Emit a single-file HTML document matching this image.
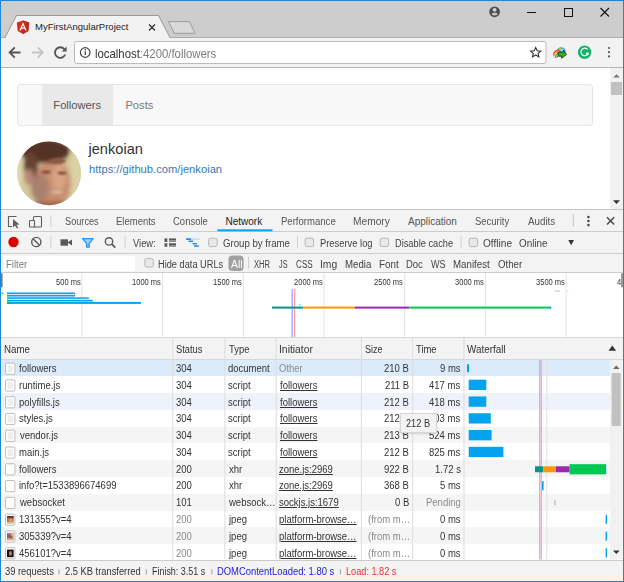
<!DOCTYPE html>
<html><head><meta charset="utf-8">
<style>
*{margin:0;padding:0;box-sizing:border-box}
html,body{width:624px;height:582px;overflow:hidden;background:#cdcdcd;font-family:"Liberation Sans",sans-serif;}
.a{position:absolute}
.t{position:absolute;white-space:nowrap;line-height:1}
#chrome{position:absolute;left:0;top:0;width:624px;height:582px}
.dt{font-size:9px;color:#333}
</style></head><body>
<div id="chrome">
<!-- title bar -->
<div class="a" style="left:0;top:0;width:624px;height:38px;background:#cdcdcd"></div>
<!-- tab -->
<svg class="a" style="left:0;top:0" width="624" height="40">
  <path d="M4.5 38.5 L16.5 15.5 L158.5 15.5 L170.5 38.5 Z" fill="#f2f2f2" stroke="#9a9a9a" stroke-width="1"/>
  <rect x="0" y="38" width="624" height="2" fill="#f2f2f2"/>
  <rect x="1" y="37.2" width="4.5" height="1" fill="#a6a6a6"/>
  <rect x="169.5" y="37.2" width="454" height="1" fill="#a6a6a6"/>
  <path d="M168.5 21.6 L189.3 21.6 L195.2 33.3 L174.4 33.3 Z" fill="#d9d9d9" stroke="#9c9c9c" stroke-width="1" stroke-linejoin="round"/><path d="M174.6 33.6 L195.2 33.6" stroke="#a8a8a8" stroke-width="1"/>
  <!-- angular icon -->
  <path d="M23 20.5 L29.2 22.6 L28.3 31 L23 34 L17.7 31 L16.8 22.6 Z" fill="#dd2a1f"/>
  <path d="M23 20.5 L29.2 22.6 L28.3 31 L23 34 Z" fill="#bf2a1e"/>
  <path d="M23 22.3 L19.4 30.5 L20.8 30.5 L21.5 28.7 L24.5 28.7 L25.2 30.5 L26.6 30.5 Z M22 27.5 L23 25 L24 27.5 Z" fill="#fff"/>
  <!-- tab close -->
  <path d="M149 24.5 L155 30.5 M155 24.5 L149 30.5" stroke="#333" stroke-width="1.3"/>
  <!-- window controls -->
  <circle cx="494.6" cy="11.8" r="5.4" fill="#4f4f4f"/>
  <circle cx="494.6" cy="9.8" r="1.9" fill="#d4d4d4"/>
  <ellipse cx="494.6" cy="14.1" rx="3" ry="1.3" fill="#c8c8c8"/>
  <rect x="527" y="12" width="9" height="1" fill="#111"/>
  <rect x="564.5" y="8.5" width="8" height="8" fill="none" stroke="#111" stroke-width="1"/>
  <path d="M600.5 8 L609 16.5 M609 8 L600.5 16.5" stroke="#111" stroke-width="1.1"/>
</svg>
<!-- tab title -->
<div class="t" style="left:35px;top:22px;font-size:9.5px;color:#222">MyFirstAngularProject</div>

<!-- toolbar -->
<div class="a" style="left:0;top:38px;width:624px;height:29px;background:#f2f2f2"></div>
<div class="a" style="left:0;top:67px;width:624px;height:1px;background:#b6b6b6"></div>
<svg class="a" style="left:0;top:38px" width="624" height="30">
  <!-- back -->
  <path d="M20.5 14.5 L9.8 14.5 M14.8 9.3 L9.6 14.5 L14.8 19.7" stroke="#555" stroke-width="1.8" fill="none"/>
  <!-- forward -->
  <path d="M32 14.5 L42.7 14.5 M37.7 9.3 L42.9 14.5 L37.7 19.7" stroke="#c4c4c4" stroke-width="1.8" fill="none"/>
  <!-- reload -->
  <path d="M64.4 11.2 A5.3 5.3 0 1 0 65.2 16.5" stroke="#555" stroke-width="1.8" fill="none"/>
  <path d="M66.6 8.6 L66.6 13.4 L61.8 13.4 Z" fill="#555"/>
  <!-- address bar -->
  <rect x="74.5" y="3.5" width="471.5" height="22" rx="2" fill="#fff" stroke="#bababa"/>
  <circle cx="85.2" cy="14.5" r="4.8" fill="none" stroke="#444" stroke-width="1.2"/>
  <rect x="84.6" y="13.2" width="1.3" height="3.8" fill="#444"/>
  <rect x="84.6" y="11" width="1.3" height="1.3" fill="#444"/>
  <!-- star -->
  <path d="M535.7 9.5 L537.2 12.8 L540.8 13.1 L538.1 15.4 L538.9 18.9 L535.7 17 L532.5 18.9 L533.3 15.4 L530.6 13.1 L534.2 12.8 Z" fill="none" stroke="#333" stroke-width="1.1"/>
  <!-- idm -->
  <circle cx="561.2" cy="13.8" r="4.6" fill="#4a90d8"/>
  <path d="M557 12 Q559 9 562 9.5 L561 13 Z" fill="#8fc85a"/>
  <circle cx="562.5" cy="12.3" r="1.6" fill="#a8d8f8"/>
  <path d="M553.8 17.5 Q553.5 12.5 559 12.2" stroke="#e83a2a" stroke-width="1.4" fill="none"/>
  <path d="M554.2 18.8 Q554.5 14 559 13.6" stroke="#f0c020" stroke-width="1.2" fill="none"/>
  <path d="M555.3 19.6 Q556 15.6 559.5 15" stroke="#3aa83a" stroke-width="1.2" fill="none"/>
  <path d="M556.4 20 Q558 17 560 16.5" stroke="#3a78d8" stroke-width="1" fill="none"/>
  <path d="M558.2 14.2 L563.2 14.2 L563.2 12.2 L566.6 16.6 L561.6 20.3 L561.6 18.2 L558.2 18.2 Z" fill="#22b822" stroke="#111" stroke-width="0.7"/>
  <!-- grammarly -->
  <circle cx="584.6" cy="14.3" r="6.7" fill="#15b36a"/>
  <path d="M587.6 11.4 A3.8 3.8 0 1 0 588.3 15.4 L586 15.4" stroke="#fff" stroke-width="1.15" fill="none"/>
  <path d="M586.8 14 L588.8 16.8 L586 17.5 Z" fill="#fff"/>
  <!-- menu -->
  <circle cx="609" cy="10" r="1.1" fill="#555"/>
  <circle cx="609" cy="14.2" r="1.1" fill="#555"/>
  <circle cx="609" cy="18.4" r="1.1" fill="#555"/>
</svg>
<div class="t" style="left:95.2px;top:47.3px;font-size:13px;color:#333;transform:scaleX(0.874);transform-origin:0 0">localhost<span style="color:#7a7a7a">:4200/followers</span></div>

<!-- page content -->
<div class="a" style="left:1px;top:68px;width:622px;height:141.5px;background:#fff"></div>
<!-- page scrollbar -->
<div class="a" style="left:610px;top:68px;width:13px;height:142px;background:#f1f1f1"></div>
<div class="a" style="left:611px;top:82px;width:10.5px;height:13px;background:#c1c1c1"></div>
<svg class="a" style="left:610px;top:68px" width="13" height="142">
  <path d="M3.2 9.6 L6.5 6.3 L9.8 9.6 Z" fill="#777"/>
  <path d="M3 132.3 L6.5 136 L10 132.3 Z" fill="#333"/>
</svg>
<!-- navbar -->
<div class="a" style="left:16.8px;top:84px;width:576.7px;height:41.5px;background:#f8f8f8;border:1px solid #e5e5e5;border-radius:3px"></div>
<div class="a" style="left:41.7px;top:85px;width:71px;height:39.5px;background:#e9e9e9"></div>
<div class="t" style="left:53.3px;top:99.5px;font-size:11.2px;color:#555">Followers</div>
<div class="t" style="left:125.4px;top:99.5px;font-size:11.2px;color:#777">Posts</div>
<!-- avatar -->
<svg class="a" style="left:0;top:130px" width="90" height="85">
<defs><clipPath id="av"><circle cx="49" cy="43.3" r="31.9"/></clipPath>
<filter id="bl" x="-20%" y="-20%" width="140%" height="140%"><feGaussianBlur stdDeviation="2.2"/></filter>
<filter id="bl2"><feGaussianBlur stdDeviation="1"/></filter></defs>
<g clip-path="url(#av)">
<rect x="10" y="5" width="80" height="80" fill="#d2c799"/>
<g filter="url(#bl)">
<rect x="12" y="20" width="9" height="60" fill="#e0dab4"/>
<rect x="71" y="20" width="14" height="60" fill="#dad2a4"/>
<ellipse cx="53" cy="53" rx="18" ry="24" fill="#c89070"/>
<ellipse cx="59" cy="47" rx="7" ry="13" fill="#d8a483"/>
<ellipse cx="45" cy="21" rx="25" ry="12" fill="#553226"/>
<ellipse cx="31" cy="36" rx="7" ry="14" fill="#654232"/>
<ellipse cx="40" cy="58" rx="9" ry="14" fill="#a98070"/>
<ellipse cx="29" cy="47" rx="4.5" ry="8" fill="#b98575"/>
<ellipse cx="52" cy="79" rx="24" ry="8" fill="#a0644a"/>
</g>
<g filter="url(#bl2)">
<ellipse cx="46" cy="42" rx="5" ry="1.6" fill="#7a4c3a"/>
<ellipse cx="62" cy="43" rx="4.5" ry="1.6" fill="#7a4c3a"/>
<ellipse cx="57" cy="62" rx="6" ry="1.8" fill="#d9b39c"/>
<ellipse cx="57" cy="31" rx="9" ry="3" fill="#8a5a44"/>
</g>
</g>
</svg>
<div class="t" style="left:88.5px;top:141.8px;font-size:14.6px;color:#333">jenkoian</div>
<div class="t" style="left:89px;top:163.5px;font-size:11.2px;color:#337ab7">https://github.com/jenkoian</div>

<!-- DEVTOOLS -->
<div class="a" style="left:1px;top:210px;width:622px;height:371px;background:#fff;"></div>
<div class="a" style="left:1px;top:209.2px;width:622px;height:1px;background:#c4c4c4;"></div>
<div class="a" style="left:1px;top:210.2px;width:622px;height:21px;background:#f3f3f3;"></div>
<div class="a" style="left:1px;top:231px;width:622px;height:1px;background:#cccccc;"></div>
<div class="a" style="left:1px;top:232px;width:622px;height:21px;background:#f3f3f3;"></div>
<div class="a" style="left:1px;top:252.6px;width:622px;height:1px;background:#cccccc;"></div>
<div class="a" style="left:1px;top:253.5px;width:622px;height:19px;background:#f3f3f3;"></div>
<div class="a" style="left:4px;top:255.5px;width:130.5px;height:15px;background:#fff;"></div>
<div class="a" style="left:1px;top:272.3px;width:622px;height:1px;background:#cccccc;"></div>
<div class="a" style="left:1px;top:337px;width:622px;height:1px;background:#d6d6d6;"></div>
<div class="a" style="left:1px;top:338px;width:622px;height:21.3px;background:#f3f3f3;"></div>
<div class="a" style="left:1px;top:359.2px;width:622px;height:1px;background:#d6d6d6;"></div>
<div class="a" style="left:1px;top:559.5px;width:622px;height:1px;background:#cccccc;"></div>
<div class="a" style="left:1px;top:560.5px;width:622px;height:20.5px;background:#f3f3f3;"></div>
<svg class="a" style="left:0;top:0" width="624" height="582">
<path d="M16.5 216.5 H8.5 V226.5 H12" fill="none" stroke="#5f5f5f" stroke-width="1.1"/>
<path d="M13 219 L13 227.5 L15 225.5 L17 228.5 L18.3 227.7 L16.5 224.8 L19.5 224.5 Z" fill="#5f5f5f"/>
<rect x="33.5" y="216.5" width="8" height="10.5" rx="1" fill="none" stroke="#5f5f5f" stroke-width="1.1"/>
<rect x="29.5" y="220.5" width="5" height="6.5" rx="0.8" fill="#f3f3f3" stroke="#5f5f5f" stroke-width="1.1"/>
<rect x="50.3" y="215.5" width="1" height="11.5" fill="#cfcfcf"/>
<rect x="572.8" y="214" width="1" height="12.4" fill="#c0c0c0"/>
<circle cx="588.4" cy="217.0" r="1.3" fill="#4a4a4a"/>
<circle cx="588.4" cy="221.0" r="1.3" fill="#4a4a4a"/>
<circle cx="588.4" cy="225.1" r="1.3" fill="#4a4a4a"/>
<path d="M607 217.3 L614.2 224.5 M614.2 217.3 L607 224.5" stroke="#4a4a4a" stroke-width="1.5"/>
<rect x="217.3" y="229.3" width="55.2" height="2" fill="#03a9f4"/>
<circle cx="13.5" cy="242" r="5.2" fill="#dd0000"/>
<circle cx="36.3" cy="242" r="4.6" fill="none" stroke="#5a5a5a" stroke-width="1.4"/>
<path d="M33.1 238.8 L39.5 245.2" stroke="#5a5a5a" stroke-width="1.4"/>
<rect x="50.3" y="236.2" width="1" height="12" fill="#cfcfcf"/>
<rect x="60.5" y="239.3" width="7.5" height="6.4" fill="#5a5a5a"/>
<path d="M67.5 242.5 L72 239.5 L72 245.5 Z" fill="#5a5a5a"/>
<path d="M82.6 238.6 H93.2 L89.2 243.4 V247 H86.6 V243.4 Z" fill="#9fd0f7" stroke="#2196f3" stroke-width="1.3" stroke-linejoin="round"/>
<circle cx="109" cy="241.4" r="3.7" fill="none" stroke="#5a5a5a" stroke-width="1.4"/>
<path d="M111.8 244.2 L115.3 247.7" stroke="#5a5a5a" stroke-width="1.8"/>
<rect x="124.6" y="236.2" width="1" height="12" fill="#cfcfcf"/>
<rect x="164.5" y="238.4" width="2.8" height="3.6" fill="#5a5a5a"/>
<rect x="169" y="238.4" width="7" height="1.8" fill="#5a5a5a"/>
<rect x="169" y="240.20000000000002" width="7" height="1.8" fill="#8a8a8a"/>
<rect x="164.5" y="243.2" width="2.8" height="3.6" fill="#5a5a5a"/>
<rect x="169" y="243.2" width="7" height="1.8" fill="#5a5a5a"/>
<rect x="169" y="245.0" width="7" height="1.8" fill="#8a8a8a"/>
<rect x="186" y="238.3" width="13.7" height="1.6" rx="0.6" fill="#c6def5"/>
<rect x="186" y="238.3" width="5" height="1.6" rx="0.6" fill="#2a8be6"/>
<rect x="188.5" y="240.6" width="4.7" height="1.5" rx="0.6" fill="#2a8be6"/>
<rect x="192.4" y="242.9" width="4.7" height="1.5" rx="0.6" fill="#2a8be6"/>
<rect x="193.9" y="245.3" width="5" height="1.5" rx="0.6" fill="#2a8be6"/>
<rect x="208.70000000000002" y="238.2" width="8.4" height="8.4" rx="1.8" fill="#e9e9e9" stroke="#b5b5b5" stroke-width="1"/>
<rect x="305.2" y="238.2" width="8.4" height="8.4" rx="1.8" fill="#e9e9e9" stroke="#b5b5b5" stroke-width="1"/>
<rect x="380.2" y="238.2" width="8.4" height="8.4" rx="1.8" fill="#e9e9e9" stroke="#b5b5b5" stroke-width="1"/>
<rect x="469.2" y="238.2" width="8.4" height="8.4" rx="1.8" fill="#e9e9e9" stroke="#b5b5b5" stroke-width="1"/>
<rect x="297" y="236.2" width="1" height="12" fill="#cfcfcf"/>
<rect x="460.6" y="236.2" width="1" height="12" fill="#cfcfcf"/>
<path d="M568.3 240 L574 240 L571.15 245.3 Z" fill="#333"/>
<rect x="144.9" y="258.6" width="8.4" height="8.4" rx="1.8" fill="#e9e9e9" stroke="#b5b5b5" stroke-width="1"/>
<rect x="228.5" y="255.5" width="15.1" height="15.5" rx="4" fill="#a0a0a0"/>
<rect x="248" y="256.5" width="1" height="12" fill="#cfcfcf"/>
<rect x="1" y="273.3" width="1.6" height="14" fill="#7a7a7a"/>
<rect x="621.3" y="273.3" width="1.5" height="14" fill="#7a7a7a"/>
</svg>
<div class="t" style="left:64.64px;top:216.44px;font-size:10px;line-height:12.0px;color:#555;transform:scaleX(0.9190);transform-origin:0 0;">Sources</div>
<div class="t" style="left:116.24px;top:216.44px;font-size:10px;line-height:12.0px;color:#555;transform:scaleX(0.9506);transform-origin:0 0;">Elements</div>
<div class="t" style="left:173.33px;top:216.44px;font-size:10px;line-height:12.0px;color:#555;transform:scaleX(0.9496);transform-origin:0 0;">Console</div>
<div class="t" style="left:225.49px;top:216.44px;font-size:10px;line-height:12.0px;color:#222;">Network</div>
<div class="t" style="left:280.74px;top:216.44px;font-size:10px;line-height:12.0px;color:#555;transform:scaleX(0.9554);transform-origin:0 0;">Performance</div>
<div class="t" style="left:352.68px;top:216.44px;font-size:10px;line-height:12.0px;color:#555;transform:scaleX(1.0198);transform-origin:0 0;">Memory</div>
<div class="t" style="left:408.00px;top:216.44px;font-size:10px;line-height:12.0px;color:#555;">Application</div>
<div class="t" style="left:474.53px;top:216.44px;font-size:10px;line-height:12.0px;color:#555;transform:scaleX(0.9466);transform-origin:0 0;">Security</div>
<div class="t" style="left:527.90px;top:216.44px;font-size:10px;line-height:12.0px;color:#555;transform:scaleX(0.9781);transform-origin:0 0;">Audits</div>
<div class="t" style="left:132.71px;top:237.53px;font-size:10px;line-height:12.0px;color:#444;transform:scaleX(0.9356);transform-origin:0 0;">View:</div>
<div class="t" style="left:222.72px;top:237.53px;font-size:10px;line-height:12.0px;color:#444;transform:scaleX(0.9635);transform-origin:0 0;">Group by frame</div>
<div class="t" style="left:319.55px;top:237.53px;font-size:10px;line-height:12.0px;color:#444;transform:scaleX(0.9360);transform-origin:0 0;">Preserve log</div>
<div class="t" style="left:394.66px;top:237.53px;font-size:10px;line-height:12.0px;color:#444;transform:scaleX(0.9252);transform-origin:0 0;">Disable cache</div>
<div class="t" style="left:482.69px;top:237.53px;font-size:10px;line-height:12.0px;color:#444;transform:scaleX(1.0108);transform-origin:0 0;">Offline</div>
<div class="t" style="left:518.71px;top:237.53px;font-size:10px;line-height:12.0px;color:#444;transform:scaleX(0.9892);transform-origin:0 0;">Online</div>
<div class="t" style="left:5.94px;top:258.64px;font-size:10px;line-height:12.0px;color:#7b7b7b;transform:scaleX(0.9484);transform-origin:0 0;">Filter</div>
<div class="t" style="left:158.36px;top:258.64px;font-size:10px;line-height:12.0px;color:#444;transform:scaleX(0.9236);transform-origin:0 0;">Hide data URLs</div>
<div class="t" style="left:230.50px;top:258.64px;font-size:10px;line-height:12.0px;color:#fff;transform:scaleX(1.0476);transform-origin:0 0;">All</div>
<div class="t" style="left:253.77px;top:258.64px;font-size:10px;line-height:12.0px;color:#444;transform:scaleX(0.7586);transform-origin:0 0;">XHR</div>
<div class="t" style="left:279.45px;top:258.64px;font-size:10px;line-height:12.0px;color:#444;transform:scaleX(0.7273);transform-origin:0 0;">JS</div>
<div class="t" style="left:295.89px;top:258.64px;font-size:10px;line-height:12.0px;color:#444;transform:scaleX(0.8163);transform-origin:0 0;">CSS</div>
<div class="t" style="left:319.87px;top:258.64px;font-size:10px;line-height:12.0px;color:#444;transform:scaleX(1.0331);transform-origin:0 0;">Img</div>
<div class="t" style="left:344.63px;top:258.64px;font-size:10px;line-height:12.0px;color:#444;transform:scaleX(0.9660);transform-origin:0 0;">Media</div>
<div class="t" style="left:378.91px;top:258.64px;font-size:10px;line-height:12.0px;color:#444;transform:scaleX(0.9843);transform-origin:0 0;">Font</div>
<div class="t" style="left:406.24px;top:258.64px;font-size:10px;line-height:12.0px;color:#444;transform:scaleX(0.9461);transform-origin:0 0;">Doc</div>
<div class="t" style="left:431.00px;top:258.64px;font-size:10px;line-height:12.0px;color:#444;transform:scaleX(0.9038);transform-origin:0 0;">WS</div>
<div class="t" style="left:452.82px;top:258.64px;font-size:10px;line-height:12.0px;color:#444;transform:scaleX(0.9729);transform-origin:0 0;">Manifest</div>
<div class="t" style="left:497.72px;top:258.64px;font-size:10px;line-height:12.0px;color:#444;transform:scaleX(0.9672);transform-origin:0 0;">Other</div>
<svg class="a" style="left:0;top:0" width="624" height="582">
<rect x="81.40" y="273" width="1" height="64" fill="#e4e4e4"/>
<rect x="162.10" y="273" width="1" height="64" fill="#e4e4e4"/>
<rect x="242.80" y="273" width="1" height="64" fill="#e4e4e4"/>
<rect x="323.50" y="273" width="1" height="64" fill="#e4e4e4"/>
<rect x="404.20" y="273" width="1" height="64" fill="#e4e4e4"/>
<rect x="484.90" y="273" width="1" height="64" fill="#e4e4e4"/>
<rect x="565.60" y="273" width="1" height="64" fill="#e4e4e4"/>
<rect x="7" y="296" width="68" height="1.4" fill="#9ad8f8"/>
<rect x="7" y="300.9" width="86" height="1.2" fill="#9ad8f8"/>
<rect x="7" y="292.5" width="68" height="1.6" fill="#03a3ef"/>
<rect x="7" y="294.9" width="68" height="1.3" fill="#03a3ef"/>
<rect x="7" y="297.3" width="81.8" height="1.5" fill="#03a3ef"/>
<rect x="7" y="299.8" width="85.7" height="1.3" fill="#03a3ef"/>
<rect x="7" y="301.9" width="134" height="2.0" fill="#03a3ef"/>
<rect x="7" y="299.8" width="3" height="1.3" fill="#1cb36a"/>
<rect x="7" y="301.9" width="3.5" height="2" fill="#1cb36a"/>
<circle cx="2.5" cy="293.3" r="0.9" fill="#03a3ef"/>
<rect x="291.5" y="289" width="1.4" height="48" fill="#a8a8ff"/>
<rect x="294" y="289" width="1.2" height="48" fill="#ff9f9f"/>
<rect x="272" y="306.6" width="31.3" height="2" fill="#009688"/>
<rect x="303.3" y="306.6" width="51.5" height="2" fill="#ff9800"/>
<rect x="354.8" y="306.6" width="54.5" height="2" fill="#9c27b0"/>
<rect x="409.3" y="306.6" width="141.5" height="2" fill="#00c853"/>
<rect x="550" y="306.6" width="1.2" height="2" fill="#03a3ef"/>
<rect x="299.3" y="304.4" width="1.2" height="1.2" fill="#03a3ef"/>
<rect x="555" y="290.5" width="5" height="1" fill="#bdbdbd"/>
<rect x="567.3" y="290.5" width="1" height="1" fill="#bdbdbd"/>
</svg>
<div class="a" style="left:0;top:273px;width:621.3px;height:64px;overflow:hidden">
<div class="t" style="left:55.86px;top:4.54px;font-size:8.2px;line-height:9.84px;color:#333;transform:scaleX(0.9200);transform-origin:0 0;">500 ms</div>
<div class="t" style="left:132.33px;top:4.54px;font-size:8.2px;line-height:9.84px;color:#333;transform:scaleX(0.9200);transform-origin:0 0;">1000 ms</div>
<div class="t" style="left:213.03px;top:4.54px;font-size:8.2px;line-height:9.84px;color:#333;transform:scaleX(0.9200);transform-origin:0 0;">1500 ms</div>
<div class="t" style="left:293.73px;top:4.54px;font-size:8.2px;line-height:9.84px;color:#333;transform:scaleX(0.9200);transform-origin:0 0;">2000 ms</div>
<div class="t" style="left:374.43px;top:4.54px;font-size:8.2px;line-height:9.84px;color:#333;transform:scaleX(0.9200);transform-origin:0 0;">2500 ms</div>
<div class="t" style="left:455.13px;top:4.54px;font-size:8.2px;line-height:9.84px;color:#333;transform:scaleX(0.9200);transform-origin:0 0;">3000 ms</div>
<div class="t" style="left:535.83px;top:4.54px;font-size:8.2px;line-height:9.84px;color:#333;transform:scaleX(0.9200);transform-origin:0 0;">3500 ms</div>
<div class="t" style="left:616.53px;top:4.54px;font-size:8.2px;line-height:9.84px;color:#333;transform:scaleX(0.9200);transform-origin:0 0;">4000 ms</div>
</div>
<div class="t" style="left:3.72px;top:343.54px;font-size:10px;line-height:12.0px;color:#333;transform:scaleX(0.9724);transform-origin:0 0;">Name</div>
<div class="t" style="left:176.23px;top:343.54px;font-size:10px;line-height:12.0px;color:#333;transform:scaleX(0.9343);transform-origin:0 0;">Status</div>
<div class="t" style="left:228.51px;top:343.54px;font-size:10px;line-height:12.0px;color:#333;transform:scaleX(0.9429);transform-origin:0 0;">Type</div>
<div class="t" style="left:278.77px;top:343.54px;font-size:10px;line-height:12.0px;color:#333;transform:scaleX(1.0346);transform-origin:0 0;">Initiator</div>
<div class="t" style="left:364.85px;top:343.54px;font-size:10px;line-height:12.0px;color:#333;transform:scaleX(0.9027);transform-origin:0 0;">Size</div>
<div class="t" style="left:416.31px;top:343.54px;font-size:10px;line-height:12.0px;color:#333;transform:scaleX(0.9434);transform-origin:0 0;">Time</div>
<div class="t" style="left:467.00px;top:343.54px;font-size:10px;line-height:12.0px;color:#333;transform:scaleX(0.9870);transform-origin:0 0;">Waterfall</div>
<div class="a" style="left:1px;top:359.6px;width:609px;height:16.78px;background:#dcebfc;"></div>
<div class="a" style="left:1px;top:393.16px;width:609px;height:16.78px;background:#eef3fb;"></div>
<div class="a" style="left:1px;top:426.72px;width:609px;height:16.78px;background:#f5f5f5;"></div>
<div class="a" style="left:1px;top:460.28px;width:609px;height:16.78px;background:#f5f5f5;"></div>
<div class="a" style="left:1px;top:493.84px;width:609px;height:16.78px;background:#f5f5f5;"></div>
<div class="a" style="left:1px;top:527.4px;width:609px;height:16.78px;background:#f5f5f5;"></div>
<svg class="a" style="left:0;top:0" width="624" height="582">
<rect x="172.3" y="338" width="1" height="221.5" fill="#dcdcdc"/>
<rect x="224.4" y="338" width="1" height="221.5" fill="#dcdcdc"/>
<rect x="275.7" y="338" width="1" height="221.5" fill="#dcdcdc"/>
<rect x="360.9" y="338" width="1" height="221.5" fill="#dcdcdc"/>
<rect x="412.2" y="338" width="1" height="221.5" fill="#dcdcdc"/>
<rect x="463.5" y="338" width="1" height="221.5" fill="#dcdcdc"/>
<rect x="546.3" y="360" width="1" height="199.5" fill="#e3e3e3"/>
<rect x="539.2" y="360" width="1.1" height="199.5" fill="#a8a8ff"/>
<rect x="540.6" y="360" width="1.3" height="199.5" fill="#ff9fb4"/>
<rect x="5.5" y="363.10" width="9.4" height="11.2" rx="0.8" fill="#fff" stroke="#bdbdbd" stroke-width="1"/>
<rect x="7.6" y="365.20" width="5.4" height="7" fill="#eeeeee"/>
<rect x="5.5" y="379.88" width="9.4" height="11.2" rx="0.8" fill="#fff" stroke="#bdbdbd" stroke-width="1"/>
<rect x="7.6" y="381.98" width="5.4" height="7" fill="#eeeeee"/>
<rect x="5.5" y="396.66" width="9.4" height="11.2" rx="0.8" fill="#fff" stroke="#bdbdbd" stroke-width="1"/>
<rect x="7.6" y="398.76" width="5.4" height="7" fill="#eeeeee"/>
<rect x="5.5" y="413.44" width="9.4" height="11.2" rx="0.8" fill="#fff" stroke="#bdbdbd" stroke-width="1"/>
<rect x="7.6" y="415.54" width="5.4" height="7" fill="#eeeeee"/>
<rect x="5.5" y="430.22" width="9.4" height="11.2" rx="0.8" fill="#fff" stroke="#bdbdbd" stroke-width="1"/>
<rect x="7.6" y="432.32" width="5.4" height="7" fill="#eeeeee"/>
<rect x="5.5" y="447.00" width="9.4" height="11.2" rx="0.8" fill="#fff" stroke="#bdbdbd" stroke-width="1"/>
<rect x="7.6" y="449.10" width="5.4" height="7" fill="#eeeeee"/>
<rect x="5.5" y="463.78" width="9.4" height="11.2" rx="0.8" fill="#fff" stroke="#bdbdbd" stroke-width="1"/>
<rect x="5.5" y="480.56" width="9.4" height="11.2" rx="0.8" fill="#fff" stroke="#bdbdbd" stroke-width="1"/>
<rect x="5.5" y="497.34" width="9.4" height="11.2" rx="0.8" fill="#fff" stroke="#bdbdbd" stroke-width="1"/>
<rect x="5.5" y="514.12" width="9.4" height="11.2" rx="0.8" fill="#fff" stroke="#bdbdbd" stroke-width="1"/>
<rect x="7.0" y="516.02" width="6.6" height="7.4" fill="#b07048"/>
<rect x="7.0" y="516.02" width="6.6" height="2.2" fill="#6a3a28"/>
<rect x="8.8" y="518.62" width="3.4" height="3.6" fill="#d89a6a"/>
<rect x="7.0" y="522.02" width="6.6" height="1.4" fill="#d8c890"/>
<rect x="5.5" y="530.90" width="9.4" height="11.2" rx="0.8" fill="#fff" stroke="#bdbdbd" stroke-width="1"/>
<rect x="7.0" y="532.80" width="6.6" height="7.4" fill="#b09080"/>
<rect x="7.0" y="533.80" width="2.5" height="4" fill="#5a6aa8"/>
<rect x="9.2" y="534.80" width="3" height="4" fill="#b84a30"/>
<rect x="11.5" y="533.30" width="2" height="3" fill="#e0c880"/>
<rect x="8.0" y="538.30" width="5" height="1.9" fill="#d8b070"/>
<rect x="5.5" y="547.68" width="9.4" height="11.2" rx="0.8" fill="#fff" stroke="#bdbdbd" stroke-width="1"/>
<rect x="7.0" y="549.58" width="6.6" height="7.6" fill="#151515"/>
<rect x="9.0" y="551.38" width="2.8" height="4" fill="#c88050"/>
<rect x="467" y="364.20" width="2.00" height="8" fill="#03a3ef"/>
<rect x="468.7" y="379.68" width="17.60" height="10.3" fill="#03a3ef"/>
<rect x="468.7" y="396.46" width="17.60" height="10.3" fill="#03a3ef"/>
<rect x="468.7" y="413.24" width="22.10" height="10.3" fill="#03a3ef"/>
<rect x="468.7" y="430.02" width="22.90" height="10.3" fill="#03a3ef"/>
<rect x="468.7" y="446.80" width="34.70" height="10.3" fill="#03a3ef"/>
<rect x="535" y="466.28" width="8.30" height="6" fill="#009688"/>
<rect x="543.3" y="466.28" width="12.70" height="6" fill="#ff9800"/>
<rect x="556" y="466.28" width="13.60" height="6" fill="#9c27b0"/>
<rect x="569.6" y="464.18" width="35.40" height="10.2" fill="#00c853"/>
<rect x="605" y="464.18" width="1.20" height="10.2" fill="#03a3ef"/>
<rect x="542" y="481.26" width="1.60" height="9" fill="#03a3ef"/>
<rect x="554.4" y="500.24" width="1.00" height="5.2" fill="#aaaaaa"/>
<rect x="605.6" y="514.82" width="1.40" height="9" fill="#03a3ef"/>
<rect x="605.6" y="531.60" width="1.40" height="9" fill="#03a3ef"/>
<rect x="605.6" y="548.38" width="1.40" height="9" fill="#03a3ef"/>
<rect x="610" y="360" width="12.6" height="199.5" fill="#f1f1f1"/>
<rect x="611.7" y="373" width="9" height="53" fill="#c1c1c1"/>
<path d="M613 369 L616.3 365.5 L619.6 369 Z" fill="#6a6a6a"/>
<path d="M613 550.5 L616.3 554 L619.6 550.5 Z" fill="#333"/>
<path d="M608.5 350.8 L612.3 345.5 L616.1 350.8 Z" fill="#333"/>
<rect x="58.5" y="569.3" width="1" height="5" fill="#a0a0a0"/>
<rect x="145.8" y="569.3" width="1" height="5" fill="#a0a0a0"/>
<rect x="211.4" y="569.3" width="1" height="5" fill="#a0a0a0"/>
<rect x="339.9" y="569.3" width="1" height="5" fill="#a0a0a0"/>
</svg>
<div class="t" style="left:19.41px;top:362.94px;font-size:10px;line-height:12.0px;color:#333;transform:scaleX(0.9500);transform-origin:0 0;">followers</div>
<div class="t" style="left:176.32px;top:362.94px;font-size:10px;line-height:12.0px;color:#333;transform:scaleX(0.9500);transform-origin:0 0;">304</div>
<div class="t" style="left:228.32px;top:362.94px;font-size:10px;line-height:12.0px;color:#333;transform:scaleX(0.9500);transform-origin:0 0;">document</div>
<div class="t" style="left:279.22px;top:362.94px;font-size:10px;line-height:12.0px;color:#8a8a8a;transform:scaleX(0.9500);transform-origin:0 0;">Other</div>
<div class="t" style="left:384.38px;top:362.94px;font-size:10px;line-height:12.0px;color:#333;transform:scaleX(0.9500);transform-origin:0 0;">210 B</div>
<div class="t" style="left:439.87px;top:362.94px;font-size:10px;line-height:12.0px;color:#333;transform:scaleX(0.9500);transform-origin:0 0;">9 ms</div>
<div class="t" style="left:18.84px;top:379.72px;font-size:10px;line-height:12.0px;color:#333;transform:scaleX(0.9500);transform-origin:0 0;">runtime.js</div>
<div class="t" style="left:176.32px;top:379.72px;font-size:10px;line-height:12.0px;color:#333;transform:scaleX(0.9500);transform-origin:0 0;">304</div>
<div class="t" style="left:228.41px;top:379.72px;font-size:10px;line-height:12.0px;color:#333;transform:scaleX(0.9500);transform-origin:0 0;">script</div>
<div class="t" style="left:279.60px;top:379.72px;font-size:10px;line-height:12.0px;color:#333;transform:scaleX(0.9500);transform-origin:0 0;text-decoration:underline;">followers</div>
<div class="t" style="left:385.14px;top:379.72px;font-size:10px;line-height:12.0px;color:#333;transform:scaleX(0.9500);transform-origin:0 0;">211 B</div>
<div class="t" style="left:429.32px;top:379.72px;font-size:10px;line-height:12.0px;color:#333;transform:scaleX(0.9500);transform-origin:0 0;">417 ms</div>
<div class="t" style="left:18.93px;top:396.50px;font-size:10px;line-height:12.0px;color:#333;transform:scaleX(0.9500);transform-origin:0 0;">polyfills.js</div>
<div class="t" style="left:176.32px;top:396.50px;font-size:10px;line-height:12.0px;color:#333;transform:scaleX(0.9500);transform-origin:0 0;">304</div>
<div class="t" style="left:228.41px;top:396.50px;font-size:10px;line-height:12.0px;color:#333;transform:scaleX(0.9500);transform-origin:0 0;">script</div>
<div class="t" style="left:279.60px;top:396.50px;font-size:10px;line-height:12.0px;color:#333;transform:scaleX(0.9500);transform-origin:0 0;text-decoration:underline;">followers</div>
<div class="t" style="left:384.38px;top:396.50px;font-size:10px;line-height:12.0px;color:#333;transform:scaleX(0.9500);transform-origin:0 0;">212 B</div>
<div class="t" style="left:429.32px;top:396.50px;font-size:10px;line-height:12.0px;color:#333;transform:scaleX(0.9500);transform-origin:0 0;">418 ms</div>
<div class="t" style="left:19.21px;top:413.28px;font-size:10px;line-height:12.0px;color:#333;transform:scaleX(0.9500);transform-origin:0 0;">styles.js</div>
<div class="t" style="left:176.32px;top:413.28px;font-size:10px;line-height:12.0px;color:#333;transform:scaleX(0.9500);transform-origin:0 0;">304</div>
<div class="t" style="left:228.41px;top:413.28px;font-size:10px;line-height:12.0px;color:#333;transform:scaleX(0.9500);transform-origin:0 0;">script</div>
<div class="t" style="left:279.60px;top:413.28px;font-size:10px;line-height:12.0px;color:#333;transform:scaleX(0.9500);transform-origin:0 0;text-decoration:underline;">followers</div>
<div class="t" style="left:384.38px;top:413.28px;font-size:10px;line-height:12.0px;color:#333;transform:scaleX(0.9500);transform-origin:0 0;">212 B</div>
<div class="t" style="left:429.32px;top:413.28px;font-size:10px;line-height:12.0px;color:#333;transform:scaleX(0.9500);transform-origin:0 0;">503 ms</div>
<div class="t" style="left:19.50px;top:430.06px;font-size:10px;line-height:12.0px;color:#333;transform:scaleX(0.9500);transform-origin:0 0;">vendor.js</div>
<div class="t" style="left:176.32px;top:430.06px;font-size:10px;line-height:12.0px;color:#333;transform:scaleX(0.9500);transform-origin:0 0;">304</div>
<div class="t" style="left:228.41px;top:430.06px;font-size:10px;line-height:12.0px;color:#333;transform:scaleX(0.9500);transform-origin:0 0;">script</div>
<div class="t" style="left:279.60px;top:430.06px;font-size:10px;line-height:12.0px;color:#333;transform:scaleX(0.9500);transform-origin:0 0;text-decoration:underline;">followers</div>
<div class="t" style="left:384.38px;top:430.06px;font-size:10px;line-height:12.0px;color:#333;transform:scaleX(0.9500);transform-origin:0 0;">213 B</div>
<div class="t" style="left:429.32px;top:430.06px;font-size:10px;line-height:12.0px;color:#333;transform:scaleX(0.9500);transform-origin:0 0;">524 ms</div>
<div class="t" style="left:18.84px;top:446.84px;font-size:10px;line-height:12.0px;color:#333;transform:scaleX(0.9500);transform-origin:0 0;">main.js</div>
<div class="t" style="left:176.32px;top:446.84px;font-size:10px;line-height:12.0px;color:#333;transform:scaleX(0.9500);transform-origin:0 0;">304</div>
<div class="t" style="left:228.41px;top:446.84px;font-size:10px;line-height:12.0px;color:#333;transform:scaleX(0.9500);transform-origin:0 0;">script</div>
<div class="t" style="left:279.60px;top:446.84px;font-size:10px;line-height:12.0px;color:#333;transform:scaleX(0.9500);transform-origin:0 0;text-decoration:underline;">followers</div>
<div class="t" style="left:384.38px;top:446.84px;font-size:10px;line-height:12.0px;color:#333;transform:scaleX(0.9500);transform-origin:0 0;">212 B</div>
<div class="t" style="left:429.32px;top:446.84px;font-size:10px;line-height:12.0px;color:#333;transform:scaleX(0.9500);transform-origin:0 0;">825 ms</div>
<div class="t" style="left:19.41px;top:463.62px;font-size:10px;line-height:12.0px;color:#333;transform:scaleX(0.9500);transform-origin:0 0;">followers</div>
<div class="t" style="left:176.22px;top:463.62px;font-size:10px;line-height:12.0px;color:#333;transform:scaleX(0.9500);transform-origin:0 0;">200</div>
<div class="t" style="left:228.60px;top:463.62px;font-size:10px;line-height:12.0px;color:#333;transform:scaleX(0.9500);transform-origin:0 0;">xhr</div>
<div class="t" style="left:279.32px;top:463.62px;font-size:10px;line-height:12.0px;color:#333;transform:scaleX(0.9500);transform-origin:0 0;text-decoration:underline;">zone.js:2969</div>
<div class="t" style="left:384.38px;top:463.62px;font-size:10px;line-height:12.0px;color:#333;transform:scaleX(0.9500);transform-origin:0 0;">922 B</div>
<div class="t" style="left:434.64px;top:463.62px;font-size:10px;line-height:12.0px;color:#333;transform:scaleX(0.9500);transform-origin:0 0;">1.72 s</div>
<div class="t" style="left:18.84px;top:480.40px;font-size:10px;line-height:12.0px;color:#333;transform:scaleX(0.9500);transform-origin:0 0;">info?t=1533896674699</div>
<div class="t" style="left:176.22px;top:480.40px;font-size:10px;line-height:12.0px;color:#333;transform:scaleX(0.9500);transform-origin:0 0;">200</div>
<div class="t" style="left:228.60px;top:480.40px;font-size:10px;line-height:12.0px;color:#333;transform:scaleX(0.9500);transform-origin:0 0;">xhr</div>
<div class="t" style="left:279.32px;top:480.40px;font-size:10px;line-height:12.0px;color:#333;transform:scaleX(0.9500);transform-origin:0 0;text-decoration:underline;">zone.js:2969</div>
<div class="t" style="left:384.38px;top:480.40px;font-size:10px;line-height:12.0px;color:#333;transform:scaleX(0.9500);transform-origin:0 0;">368 B</div>
<div class="t" style="left:439.87px;top:480.40px;font-size:10px;line-height:12.0px;color:#333;transform:scaleX(0.9500);transform-origin:0 0;">5 ms</div>
<div class="t" style="left:19.50px;top:497.18px;font-size:10px;line-height:12.0px;color:#333;transform:scaleX(0.9500);transform-origin:0 0;">websocket</div>
<div class="t" style="left:175.94px;top:497.18px;font-size:10px;line-height:12.0px;color:#333;transform:scaleX(0.9500);transform-origin:0 0;">101</div>
<div class="t" style="left:228.70px;top:497.18px;font-size:10px;line-height:12.0px;color:#333;transform:scaleX(0.9500);transform-origin:0 0;">websock…</div>
<div class="t" style="left:279.41px;top:497.18px;font-size:10px;line-height:12.0px;color:#333;transform:scaleX(0.9500);transform-origin:0 0;text-decoration:underline;">sockjs.js:1679</div>
<div class="t" style="left:395.03px;top:497.18px;font-size:10px;line-height:12.0px;color:#333;transform:scaleX(0.9500);transform-origin:0 0;">0 B</div>
<div class="t" style="left:425.90px;top:497.18px;font-size:10px;line-height:12.0px;color:#8a8a8a;transform:scaleX(0.9500);transform-origin:0 0;">Pending</div>
<div class="t" style="left:18.74px;top:513.95px;font-size:10px;line-height:12.0px;color:#333;transform:scaleX(0.9500);transform-origin:0 0;">131355?v=4</div>
<div class="t" style="left:176.22px;top:513.95px;font-size:10px;line-height:12.0px;color:#8a8a8a;transform:scaleX(0.9500);transform-origin:0 0;">200</div>
<div class="t" style="left:228.98px;top:513.95px;font-size:10px;line-height:12.0px;color:#333;transform:scaleX(0.9500);transform-origin:0 0;">jpeg</div>
<div class="t" style="left:279.13px;top:513.95px;font-size:10px;line-height:12.0px;color:#333;transform:scaleX(0.9500);transform-origin:0 0;text-decoration:underline;">platform-browse…</div>
<div class="t" style="left:367.86px;top:513.95px;font-size:10px;line-height:12.0px;color:#8a8a8a;transform:scaleX(0.9500);transform-origin:0 0;">(from m…</div>
<div class="t" style="left:439.87px;top:513.95px;font-size:10px;line-height:12.0px;color:#333;transform:scaleX(0.9500);transform-origin:0 0;">0 ms</div>
<div class="t" style="left:19.12px;top:530.74px;font-size:10px;line-height:12.0px;color:#333;transform:scaleX(0.9500);transform-origin:0 0;">305339?v=4</div>
<div class="t" style="left:176.22px;top:530.74px;font-size:10px;line-height:12.0px;color:#8a8a8a;transform:scaleX(0.9500);transform-origin:0 0;">200</div>
<div class="t" style="left:228.98px;top:530.74px;font-size:10px;line-height:12.0px;color:#333;transform:scaleX(0.9500);transform-origin:0 0;">jpeg</div>
<div class="t" style="left:279.13px;top:530.74px;font-size:10px;line-height:12.0px;color:#333;transform:scaleX(0.9500);transform-origin:0 0;text-decoration:underline;">platform-browse…</div>
<div class="t" style="left:367.86px;top:530.74px;font-size:10px;line-height:12.0px;color:#8a8a8a;transform:scaleX(0.9500);transform-origin:0 0;">(from m…</div>
<div class="t" style="left:439.87px;top:530.74px;font-size:10px;line-height:12.0px;color:#333;transform:scaleX(0.9500);transform-origin:0 0;">0 ms</div>
<div class="t" style="left:19.31px;top:547.51px;font-size:10px;line-height:12.0px;color:#333;transform:scaleX(0.9500);transform-origin:0 0;">456101?v=4</div>
<div class="t" style="left:176.22px;top:547.51px;font-size:10px;line-height:12.0px;color:#8a8a8a;transform:scaleX(0.9500);transform-origin:0 0;">200</div>
<div class="t" style="left:228.98px;top:547.51px;font-size:10px;line-height:12.0px;color:#333;transform:scaleX(0.9500);transform-origin:0 0;">jpeg</div>
<div class="t" style="left:279.13px;top:547.51px;font-size:10px;line-height:12.0px;color:#333;transform:scaleX(0.9500);transform-origin:0 0;text-decoration:underline;">platform-browse…</div>
<div class="t" style="left:367.86px;top:547.51px;font-size:10px;line-height:12.0px;color:#8a8a8a;transform:scaleX(0.9500);transform-origin:0 0;">(from m…</div>
<div class="t" style="left:439.87px;top:547.51px;font-size:10px;line-height:12.0px;color:#333;transform:scaleX(0.9500);transform-origin:0 0;">0 ms</div>
<div class="a" style="left:399.6px;top:413.1px;width:37.4px;height:19.8px;background:#f3f3f3;border:1px solid #d6d6d6;box-shadow:0 1px 2px rgba(0,0,0,0.15)"></div>
<div class="t" style="left:406.44px;top:417.06px;font-size:10.5px;line-height:12.6px;color:#333;transform:scaleX(0.8768);transform-origin:0 0;">212 B</div>
<div class="t" style="left:4.83px;top:565.36px;font-size:10.5px;line-height:12.6px;color:#333;transform:scaleX(0.8895);transform-origin:0 0;">39 requests</div>
<div class="t" style="left:65.23px;top:565.36px;font-size:10.5px;line-height:12.6px;color:#333;transform:scaleX(0.8881);transform-origin:0 0;">2.5 KB transferred</div>
<div class="t" style="left:152.19px;top:565.36px;font-size:10.5px;line-height:12.6px;color:#333;transform:scaleX(0.8511);transform-origin:0 0;">Finish: 3.51 s</div>
<div class="t" style="left:217.35px;top:565.36px;font-size:10.5px;line-height:12.6px;color:#2323d8;transform:scaleX(0.8968);transform-origin:0 0;">DOMContentLoaded: 1.80 s</div>
<div class="t" style="left:345.97px;top:565.36px;font-size:10.5px;line-height:12.6px;color:#e8303a;transform:scaleX(0.8727);transform-origin:0 0;">Load: 1.82 s</div>
</div>
<div class="a" style="left:0;top:0;width:624px;height:1px;background:#1f86d7"></div>
<div class="a" style="left:0;top:0;width:1px;height:582px;background:#1f86d7"></div>
<div class="a" style="left:623px;top:0;width:1px;height:582px;background:#1f86d7"></div>
<div class="a" style="left:0;top:581px;width:624px;height:1px;background:#1f86d7"></div>
</body></html>
